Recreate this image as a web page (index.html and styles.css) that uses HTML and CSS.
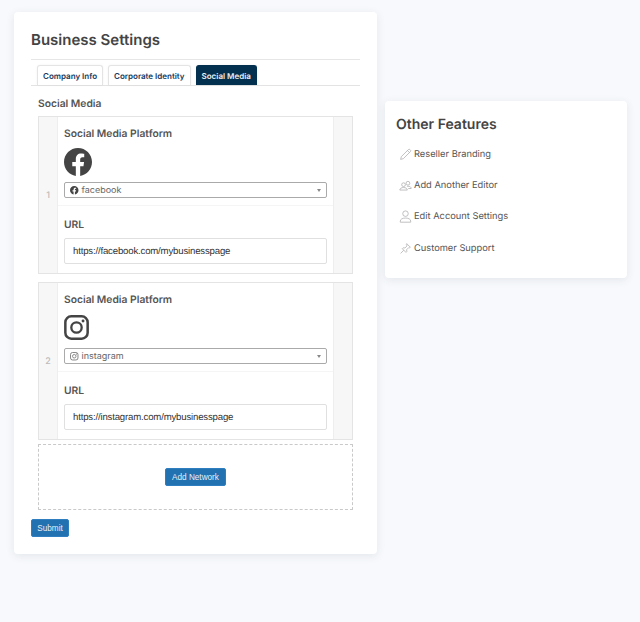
FILE: index.html
```html
<!DOCTYPE html>
<html lang="en">
<head>
<meta charset="utf-8">
<title>Business Settings</title>
<link rel="stylesheet" href="styles.css">
</head>
<body>
<div class="page">
  <main class="card main-card">
    <h1 class="title">Business Settings</h1>
    <nav class="tabs">
      <a class="tab">Company Info</a>
      <a class="tab">Corporate Identity</a>
      <a class="tab active">Social Media</a>
    </nav>
    <div class="section">
      <h2 class="section-title">Social Media</h2>
      <div class="row">
        <div class="handle"><span>1</span></div>
        <div class="row-body">
          <div class="field platform">
            <label class="label">Social Media Platform</label>
            <svg class="big-icon" viewBox="0 0 24 24"><path fill="#444" d="M24 12.07C24 5.4 18.63 0 12 0S0 5.4 0 12.07c0 6.03 4.39 11.02 10.13 11.93v-8.44H7.08v-3.49h3.05V9.41c0-3.02 1.79-4.69 4.53-4.69 1.31 0 2.68.23 2.68.23v2.97h-1.51c-1.49 0-1.96.93-1.96 1.89v2.26h3.33l-.53 3.49h-2.8V24C19.61 23.09 24 18.1 24 12.07z"/></svg>
            <div class="select">
              <svg class="small-icon" viewBox="0 0 24 24"><path fill="#444" d="M24 12.07C24 5.4 18.63 0 12 0S0 5.4 0 12.07c0 6.03 4.39 11.02 10.13 11.93v-8.44H7.08v-3.49h3.05V9.41c0-3.02 1.79-4.69 4.53-4.69 1.31 0 2.68.23 2.68.23v2.97h-1.51c-1.49 0-1.96.93-1.96 1.89v2.26h3.33l-.53 3.49h-2.8V24C19.61 23.09 24 18.1 24 12.07z"/></svg>
              <span class="select-text">facebook</span>
              <span class="caret"></span>
            </div>
          </div>
          <div class="field url">
            <label class="label">URL</label>
            <div class="input">https://facebook.com/mybusinesspage</div>
          </div>
        </div>
        <div class="side"></div>
      </div>
      <div class="row">
        <div class="handle"><span>2</span></div>
        <div class="row-body">
          <div class="field platform">
            <label class="label">Social Media Platform</label>
            <svg class="big-icon big-icon-ig" viewBox="0 0 26 26"><rect x="1.4" y="1.4" width="23.2" height="23.2" rx="6.2" fill="none" stroke="#444" stroke-width="2.6"/><circle cx="13" cy="13" r="5.4" fill="none" stroke="#444" stroke-width="2.4"/><circle cx="19.8" cy="6.2" r="1.5" fill="#444"/></svg>
            <div class="select">
              <svg class="small-icon" viewBox="0 0 26 26"><rect x="1.6" y="1.6" width="22.8" height="22.8" rx="6.2" fill="none" stroke="#666" stroke-width="2.4"/><circle cx="13" cy="13" r="5.4" fill="none" stroke="#666" stroke-width="2.2"/><circle cx="19.8" cy="6.2" r="1.6" fill="#666"/></svg>
              <span class="select-text">instagram</span>
              <span class="caret"></span>
            </div>
          </div>
          <div class="field url">
            <label class="label">URL</label>
            <div class="input">https://instagram.com/mybusinesspage</div>
          </div>
        </div>
        <div class="side"></div>
      </div>
      <div class="add-box"><button class="btn" type="button">Add Network</button></div>
    </div>
    <button class="btn submit" type="button">Submit</button>
  </main>
  <aside class="card side-card">
    <h2 class="side-title">Other Features</h2>
    <ul class="features">
      <li class="feature">
        <svg class="f-icon" viewBox="0 0 16 16"><path d="M2 14l.9-3.4L11.6 1.9a1.3 1.3 0 0 1 1.8 0l.7.7a1.3 1.3 0 0 1 0 1.8L5.4 13.1z M10.4 3.1l2.5 2.5" /></svg>
        <span>Reseller Branding</span>
      </li>
      <li class="feature">
        <svg class="f-icon" viewBox="0 0 16 16"><circle cx="5.6" cy="7" r="2.3"/><circle cx="11" cy="5.2" r="2.3"/><path d="M1 13.6c0-2 2-3.1 4.6-3.1s4.6 1.1 4.6 3.1z M9.8 9c.4-.1.8-.1 1.2-.1 2.4 0 4 1 4 2.8h-3.6"/></svg>
        <span>Add Another Editor</span>
      </li>
      <li class="feature">
        <svg class="f-icon" viewBox="0 0 16 16"><circle cx="8" cy="4.5" r="3.4"/><path d="M1.6 15v-1.4c0-2.3 2.7-3.7 6.4-3.7s6.4 1.4 6.4 3.7V15z"/></svg>
        <span>Edit Account Settings</span>
      </li>
      <li class="feature">
        <svg class="f-icon" viewBox="0 0 16 16"><path d="M9.5 2l4.5 4.5-1 .6-1-.2-2.6 2.6.2 2.3-1 1L4 8.2l1-1 2.3.2L9.9 4.8l-.9-1.8z M5.8 10.2L2 14"/></svg>
        <span>Customer Support</span>
      </li>
    </ul>
  </aside>
</div>
</body>
</html>
```

FILE: styles.css
```css
* { box-sizing: border-box; }
html, body { margin: 0; padding: 0; }
body {
  background: #f7f9fc;
  font-family: Inter, "Liberation Sans", sans-serif;
  color: #444;
  height: 622px;
  overflow: hidden;
  text-rendering: geometricPrecision;
}
.page {
  display: flex;
  align-items: flex-start;
  gap: 8px;
  padding: 12px 13px 0 14px;
}
.card {
  background: #fff;
  border-radius: 4px;
  box-shadow: 0 2px 8px rgba(60, 70, 90, 0.1);
}
.main-card {
  width: 363px;
  height: 542px;
  padding: 19px 17px 0;
}
.title {
  margin: 0;
  font-size: 15px;
  line-height: 18px;
  font-weight: 600;
  color: #444;
  padding-bottom: 10px;
  border-bottom: 1px solid #e6e6e6;
}
.tabs {
  display: flex;
  gap: 5px;
  padding: 5px 0 0 6px;
  border-bottom: 1px solid #e3e3e3;
  height: 26px;
}
.tab {
  height: 20px;
  padding: 0 5px;
  font-size: 8px;
  line-height: 20px;
  font-weight: 600;
  color: #17395c;
  background: #fff;
  border: 1px solid #e4e4e4;
  border-bottom: 0;
  border-radius: 3px 3px 0 0;
  box-shadow: 0 0 3px rgba(0, 0, 0, 0.05);
}
.tab.active {
  background: #04304f;
  border-color: #04304f;
  color: #e9eef3;
}
.section { padding: 0 7px; }
.section-title {
  margin: 0;
  padding-top: 12px;
  font-size: 10.3px;
  line-height: 13px;
  font-weight: 600;
  color: #555;
  height: 30px;
}
.row {
  display: flex;
  height: 158px;
  margin-bottom: 8px;
  border: 1px solid #e4e4e4;
  background: #fff;
}
.row + .row { margin-bottom: 4px; }
.handle {
  width: 19px;
  background: #f7f7f7;
  border-right: 1px solid #eee;
  display: flex;
  align-items: center;
  justify-content: center;
  font-size: 9px;
  color: #bbb;
  font-weight: 500;
}
.side {
  width: 19px;
  background: #f7f7f7;
  border-left: 1px solid #eee;
}
.row-body { flex: 1; }
.field { padding: 0 6px; }
.platform {
  height: 89px;
  padding-top: 11px;
  border-bottom: 1px solid #f5f5f5;
}
.label {
  display: block;
  font-size: 10.3px;
  line-height: 13px;
  font-weight: 600;
  color: #555;
}
.big-icon {
  display: block;
  width: 28px;
  height: 28px;
  margin-top: 7px;
}
.big-icon-ig {
  width: 25px;
  height: 25px;
  margin-top: 8px;
  margin-bottom: 8px;
}
.select {
  display: flex;
  align-items: center;
  height: 16px;
  margin-top: 6px;
  padding: 1px 5px 0;
  border: 1px solid #aaa;
  border-radius: 2px;
  background: #fff;
  font-size: 9px;
  color: #666;
}
.small-icon { width: 8.5px; height: 8.5px; flex: none; }
.select-text { margin-left: 3px; }
.caret {
  margin-left: auto;
  width: 0;
  height: 0;
  border-left: 2.5px solid transparent;
  border-right: 2.5px solid transparent;
  border-top: 3px solid #888;
}
.url { padding-top: 13px; }
.url .label { line-height: 12px; }
.input {
  height: 26px;
  margin-top: 7px;
  padding: 0 8px;
  border: 1px solid #e0e0e0;
  border-radius: 2px;
  font-family: "Liberation Sans", sans-serif;
  font-size: 9.6px;
  letter-spacing: -0.17px;
  line-height: 25px;
  color: #333;
}
.add-box {
  display: flex;
  align-items: center;
  justify-content: center;
  height: 66px;
  border: 1px dashed #c9c9c9;
  border-radius: 1px;
}
.btn {
  display: block;
  height: 18px;
  padding: 1px 6px 0;
  border: 1px solid #2f7ec0;
  border-radius: 2px;
  background: #2271b1;
  color: #e8f0f7;
  font-family: "Liberation Sans", sans-serif;
  font-size: 8.2px;
  line-height: 15px;
}
.submit {
  width: 38px;
  padding: 1px 0 0;
  margin-top: 9px;
}
.side-card {
  width: 242px;
  height: 177px;
  margin-top: 89px;
  padding: 15px 11px 0;
}
.side-title {
  margin: 0;
  font-size: 14px;
  line-height: 17px;
  font-weight: 600;
  color: #444;
}
.features {
  list-style: none;
  margin: 15px 0 0;
  padding: 0 0 0 3px;
}
.feature {
  display: flex;
  align-items: center;
  gap: 2px;
  height: 13px;
  margin-bottom: 18.2px;
  font-size: 9.3px;
  color: #555;
}
.f-icon {
  width: 13px;
  height: 13px;
  flex: none;
  fill: none;
  stroke: #aaa;
  stroke-width: 0.9;
}
```
